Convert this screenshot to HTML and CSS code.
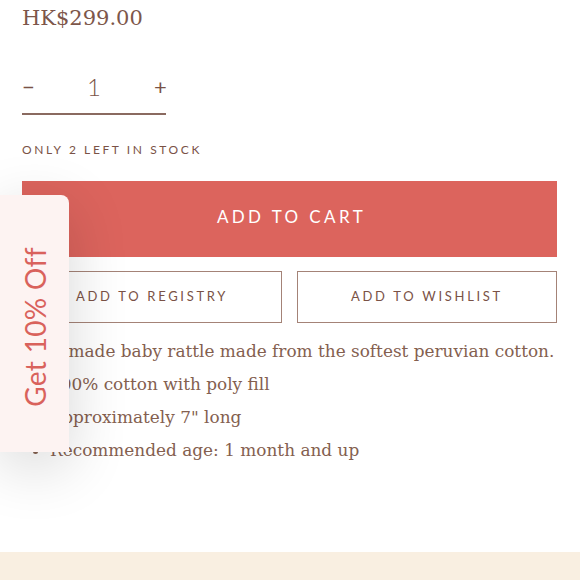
FILE: index.html
```html
<!DOCTYPE html>
<html>
<head>
<meta charset="utf-8">
<link rel="stylesheet" href="styles.css">
</head>
<body>
<main class="product">
  <div class="price">HK$299.00</div>
  <div class="qty">
    <span class="qty-btn">−</span>
    <span class="qty-val">1</span>
    <span class="qty-btn">+</span>
  </div>
  <div class="stock">ONLY 2 LEFT IN STOCK</div>
  <button class="cart">ADD TO CART</button>
  <div class="secondary">
    <button class="outline">ADD TO REGISTRY</button>
    <button class="outline">ADD TO WISHLIST</button>
  </div>
  <div class="desc">
    <p>Handmade baby rattle made from the softest peruvian cotton.</p>
    <ul>
      <li>100% cotton with poly fill</li>
      <li>Approximately 7" long</li>
      <li>Recommended age: 1 month and up</li>
    </ul>
  </div>
</main>
<footer class="band"></footer>
<aside class="promo"><span>Get 10% Off</span></aside>
</body>
</html>
```
FILE: styles.css
```css
html, body {
  margin: 0;
  padding: 0;
  background: #ffffff;
}
body {
  width: 580px;
  height: 580px;
  overflow: hidden;
  position: relative;
  display: flex;
  flex-direction: column;
}
.product {
  padding: 4px 23px 0 22px;
  flex: 1;
  display: flex;
  flex-direction: column;
  color: #7a5246;
}
.price {
  font-family: "DejaVu Serif", serif;
  font-size: 21px;
  line-height: 28px;
  color: #7d564a;
}
.qty {
  margin-top: 41px;
  width: 144px;
  height: 26px;
  padding-bottom: 14px;
  border-bottom: 2px solid #8a6a60;
  display: flex;
  justify-content: space-between;
  align-items: center;
  font-family: "Lato", sans-serif;
  color: #7a5246;
}
.qty-btn {
  font-size: 22px;
  width: 12px;
  text-align: center;
  font-weight: 400;
}
.qty-val {
  font-size: 24px;
  font-weight: 300;
}
.stock {
  margin-top: 28px;
  font-family: "Lato", sans-serif;
  font-size: 12px;
  letter-spacing: 2.6px;
  line-height: 14px;
  color: #7a5246;
}
.cart {
  margin-top: 24px;
  height: 76px;
  width: 100%;
  border: none;
  background: #dc645d;
  color: #ffffff;
  font-family: "Lato", sans-serif;
  font-size: 17px;
  letter-spacing: 3.4px;
  padding: 0 0 5px 4px;
}
.secondary {
  margin-top: 14px;
  display: flex;
  gap: 15px;
}
.outline {
  flex: 1;
  height: 52px;
  background: #ffffff;
  border: 1.5px solid #a48377;
  color: #7a5246;
  font-family: "Lato", sans-serif;
  font-size: 13px;
  letter-spacing: 2.7px;
  padding: 0 0 2px 0;
}
.desc {
  margin-top: 12px;
  font-family: "DejaVu Serif", serif;
  font-size: 16.9px;
  line-height: 33px;
  color: #84604f;
}
.desc p {
  margin: 0;
}
.desc ul {
  margin: 0;
  padding-left: 28px;
}
.band {
  height: 28px;
  background: #f9efe1;
  flex: none;
}
.promo {
  position: absolute;
  left: 0;
  top: 195px;
  width: 69px;
  height: 257px;
  background: #fdf3f2;
  border-radius: 0 8px 0 0;
  box-shadow: 0 14px 60px rgba(0, 0, 0, 0.16);
  display: flex;
  align-items: center;
  justify-content: center;
}
.promo span {
  transform: translateY(3px) rotate(-90deg);
  white-space: nowrap;
  font-family: "Lato", sans-serif;
  font-size: 28px;
  color: #d9625c;
  letter-spacing: 0.3px;
}
```
